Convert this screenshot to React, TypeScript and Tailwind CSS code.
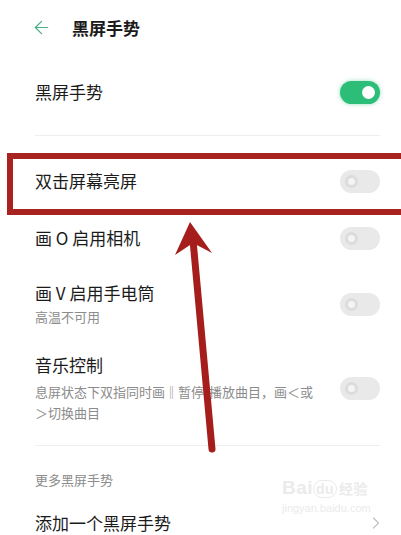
import { ArrowLeft, ChevronRight } from "lucide-react";

const font = { fontFamily: '"Noto Sans CJK SC", "Noto Sans", sans-serif' };

function Toggle({ on }: { on?: boolean }) {
  if (on) {
    return (
      <div className="flex h-[23px] w-[40px] items-center justify-end rounded-full bg-[#2cbd78] px-[5px] shadow-[0_0_4px_rgba(44,189,120,0.5)]">
        <div className="h-[13px] w-[13px] rounded-full bg-white" />
      </div>
    );
  }
  return (
    <div className="flex h-[23px] w-[40px] items-center rounded-full bg-[#e9e9e9] px-[5px]">
      <div className="h-[13px] w-[13px] rounded-full border-[3px] border-[#dcdcdc] bg-[#f4f4f4]" />
    </div>
  );
}

export default function App() {
  return (
    <div className="relative h-[535px] w-[401px] overflow-hidden bg-white text-[#1b1b1b]" style={font}>
      {/* header */}
      <div className="flex h-[55px] items-center pl-[31px]">
        <ArrowLeft className="text-[#4aae84]" size={21} strokeWidth={1.4} />
        <span className="ml-[20px] text-[17px] font-bold leading-6">黑屏手势</span>
      </div>

      <div className="px-[35px] pr-[21px]">
        <div className="flex h-[74px] items-center justify-between">
          <span className="text-[17px] leading-6">黑屏手势</span>
          <Toggle on />
        </div>
        <div className="mt-[6px] h-px bg-[#eeeeee]" />

        <div className="mt-[20px] flex h-[50px] items-center justify-between">
          <span className="text-[17px] leading-6">双击屏幕亮屏</span>
          <Toggle />
        </div>

        <div className="mt-[7px] flex h-[50px] items-center justify-between">
          <span className="text-[17px] leading-6">画 O 启用相机</span>
          <Toggle />
        </div>

        <div className="mt-[18px] flex items-center justify-between">
          <div className="flex flex-col">
            <span className="text-[17px] leading-6">画 V 启用手电筒</span>
            <span className="mt-[2px] text-[13px] leading-5 text-[#8c8c8c]">高温不可用</span>
          </div>
          <Toggle />
        </div>

        <div className="mt-[26px] flex items-center justify-between">
          <div className="flex flex-col">
            <span className="text-[17px] leading-6">音乐控制</span>
            <span className="mt-[4px] text-[13px] leading-[21px] text-[#8c8c8c]">
              息屏状态下双指同时画‖暂停/播放曲目，画＜或
              <br />
              ＞切换曲目
            </span>
          </div>
          <Toggle />
        </div>

        <div className="mt-[22px] h-px bg-[#eeeeee]" />

        <div className="mt-[24px] text-[13px] leading-5 text-[#8c8c8c]">更多黑屏手势</div>

        <div className="mt-[21px] flex h-[24px] items-center justify-between">
          <span className="text-[17px] leading-6">添加一个黑屏手势</span>
          <ChevronRight className="mr-[-6px] text-[#c4c4c4]" size={20} strokeWidth={1.5} />
        </div>
      </div>

      {/* watermark */}
      <div className="pointer-events-none absolute left-[282px] top-[478px] flex flex-col items-start leading-none text-[#ebebeb]">
        <span className="text-[19px] font-bold tracking-wide" style={{ fontFamily: '"Liberation Sans", sans-serif' }}>
          Bai<span className="rounded-full border border-[#ebebeb] px-[2px] text-[14px]">du</span>
          <span className="ml-[2px] text-[14px]" style={font}>经验</span>
        </span>
        <span className="mt-[6px] text-[11px]" style={{ fontFamily: '"Liberation Sans", sans-serif' }}>jingyan.baidu.com</span>
      </div>

      {/* annotation box */}
      <div className="pointer-events-none absolute left-[7px] top-[153px] h-[62px] w-[400px] border-[6px] border-[#a8221f]" />

      {/* annotation arrow */}
      <svg className="pointer-events-none absolute left-0 top-0" width="401" height="535" viewBox="0 0 401 535">
        <line x1="212" y1="449" x2="193" y2="240" stroke="#a51e1c" strokeWidth="7" strokeLinecap="round" />
        <polygon points="190,222 212,253 193,243 175,255" fill="#a51e1c" />
      </svg>
    </div>
  );
}
